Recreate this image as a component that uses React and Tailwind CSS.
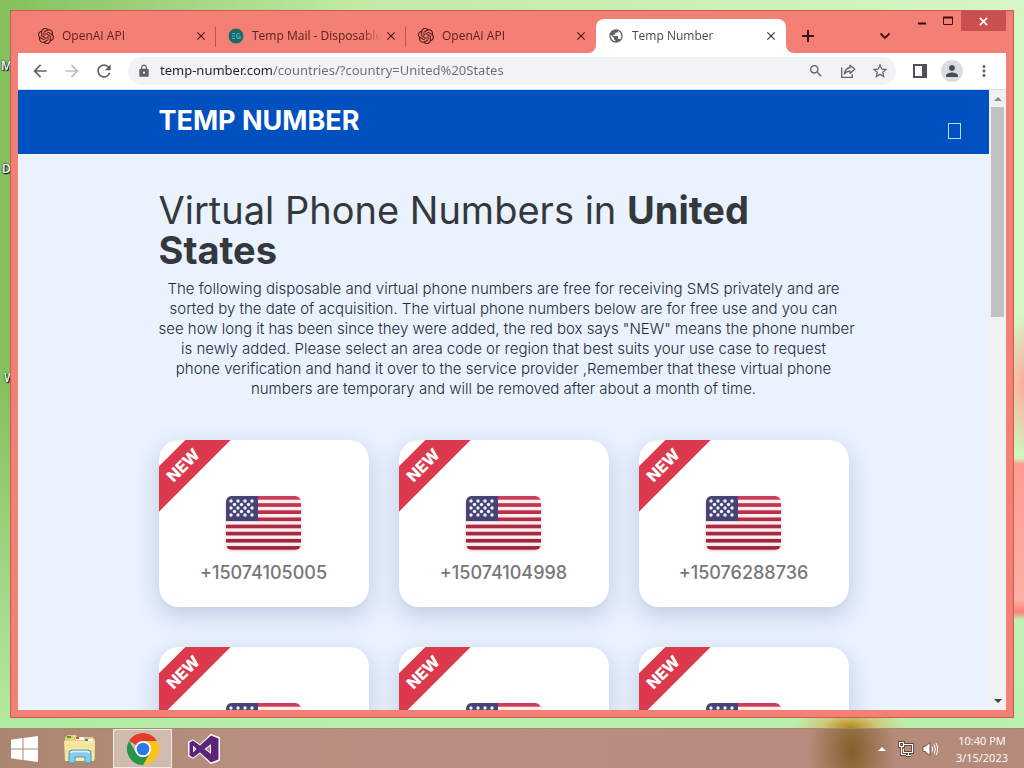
import { SiOpenai } from "react-icons/si";
import {
  MdArrowBack,
  MdArrowForward,
  MdClose,
  MdLock,
  MdMoreVert,
  MdPerson,
  MdPublic,
  MdRefresh,
  MdSearch,
  MdStarBorder,
} from "react-icons/md";

const TABS = [
  { id: 1, title: "OpenAI API", icon: "openai" },
  { id: 2, title: "Temp Mail - Disposable", icon: "mail" },
  { id: 3, title: "OpenAI API", icon: "openai" },
  { id: 4, title: "Temp Number", icon: "globe", active: true },
];

const CARDS = [
  { id: 1, number: "+15074105005" },
  { id: 2, number: "+15074104998" },
  { id: 3, number: "+15076288736" },
  { id: 4 },
  { id: 5 },
  { id: 6 },
];

const INTRO = [
  "The following disposable and virtual phone numbers are free for receiving SMS privately and are",
  "sorted by the date of acquisition. The virtual phone numbers below are for free use and you can",
  "see how long it has been since they were added, the red box says \"NEW\" means the phone number",
  "is newly added. Please select an area code or region that best suits your use case to request",
  "phone verification and hand it over to the service provider ,Remember that these virtual phone",
  "numbers are temporary and will be removed after about a month of time.",
];

function Favicon({ name }) {
  if (name === "openai") return <SiOpenai className="w-4 h-4 shrink-0 text-[#4a1713]" />;
  if (name === "globe") return <MdPublic className="w-4 h-4 shrink-0 text-[#5f6368]" />;
  return (
    <svg viewBox="0 0 16 16" className="w-4 h-4 shrink-0">
      <circle cx="8" cy="8" r="7.5" fill="#176b6b" />
      <path d="M4 5.500h3M4 8h3M4 10.500h3M12 5.800c-2-.8-3.500 0-3.500 2.200s1.500 3 3.500 2.200V8h-1.500" fill="none" stroke="#4fb5ad" strokeWidth="1.100" />
    </svg>
  );
}

function TabFoot({ className }) {
  return (
    <svg viewBox="0 0 8 8" className={`absolute bottom-0 w-2 h-2 ${className}`}>
      <path d="M8 0v8H0a8 8 0 0 0 8-8z" fill="#fff" />
    </svg>
  );
}

function Tab({ tab, divider }) {
  return (
    <div
      className={`relative flex items-center w-[190px] h-full pl-3 pr-2 ${
        tab.active ? "bg-white rounded-t-lg text-[#45494d]" : "text-[#5a221d]"
      }`}
    >
      {tab.active && (
        <>
          <TabFoot className="-left-2" />
          <TabFoot className="-right-2 -scale-x-100" />
        </>
      )}
      <Favicon name={tab.icon} />
      <span className="flex-1 ml-2 text-xs whitespace-nowrap overflow-hidden [mask-image:linear-gradient(to_right,#000_86%,transparent)]">
        {tab.title}
      </span>
      <button aria-label="Close tab" className="flex items-center justify-center w-[14px] h-4 ml-1">
        <MdClose className={`w-[14px] h-[14px] ${tab.active ? "text-[#35383b]" : "text-[#4a1713]"}`} stroke="currentColor" />
      </button>
      {divider && <span className="absolute right-0 top-2 w-px h-5 bg-[#b9564c]" />}
    </div>
  );
}

function TitleBar() {
  return (
    <div className="flex h-[42px] shrink-0 pl-2">
      <div className="flex pt-2">
        {TABS.map((tab, i) => (
          <Tab key={tab.id} tab={tab} divider={i < 2} />
        ))}
      </div>
      <button aria-label="New tab" className="flex items-center justify-center w-7 ml-2 mt-2">
        <svg viewBox="0 0 14 14" className="w-[14px] h-[14px]">
          <path d="M7 1v12M1 7h12" stroke="#3b120f" strokeWidth="2" />
        </svg>
      </button>
      <div className="flex-1" />
      <button aria-label="Search tabs" className="flex items-center justify-center w-7 mt-2 mr-[10px]">
        <svg viewBox="0 0 12 8" className="w-3 h-2">
          <path d="M1.500 1.500L6 6l4.500-4.500" fill="none" stroke="#3b120f" strokeWidth="1.800" />
        </svg>
      </button>
      <div className="flex h-5">
        <button aria-label="Minimize" className="flex items-center justify-center w-[26px]">
          <svg viewBox="0 0 10 10" className="w-[10px] h-[10px]">
            <path d="M1 7.500h8" stroke="#220907" strokeWidth="2" />
          </svg>
        </button>
        <button aria-label="Maximize" className="flex items-center justify-center w-[26px]">
          <svg viewBox="0 0 12 10" className="w-3 h-[10px]">
            <path d="M1.500 1.500h9v7h-9z" fill="none" stroke="#3b120f" />
            <path d="M1 1.500h10" stroke="#3b120f" strokeWidth="2" />
          </svg>
        </button>
        <button aria-label="Close window" className="flex items-center justify-center w-[45px] bg-[#c9504f]">
          <svg viewBox="0 0 10 10" className="w-[9px] h-[9px]">
            <path d="M1 1l8 8M9 1L1 9" stroke="#fff" strokeWidth="1.800" />
          </svg>
        </button>
      </div>
    </div>
  );
}

function ToolButton({ label, children }) {
  return (
    <button aria-label={label} className="flex items-center justify-center w-8 h-7 shrink-0">
      {children}
    </button>
  );
}

function Toolbar() {
  return (
    <div className="flex items-center h-[37px] shrink-0 bg-white px-[6px] text-[#5f6368] border-b border-[#d9dde1]">
      <ToolButton label="Back">
        <MdArrowBack className="w-5 h-5" />
      </ToolButton>
      <ToolButton label="Forward">
        <MdArrowForward className="w-5 h-5 text-[#bcbec0]" />
      </ToolButton>
      <ToolButton label="Reload">
        <MdRefresh className="w-5 h-5" />
      </ToolButton>
      <div className="flex items-center flex-1 h-7 mx-2 pl-2 rounded-full bg-[#f1f3f4]">
        <MdLock className="w-[14px] h-[14px] mx-px shrink-0" />
        <input
          aria-label="Address"
          defaultValue="temp-number.com/countries/?country=United%20States"
          className="flex-1 min-w-0 ml-2 font-['Noto_Sans',sans-serif] text-[13px] outline-none text-transparent bg-clip-text bg-[linear-gradient(to_right,#202124_113px,#6a6e73_113px)]"
        />
        <ToolButton label="Zoom">
          <MdSearch className="w-4 h-4" />
        </ToolButton>
        <ToolButton label="Share">
          <svg viewBox="0 0 16 16" className="w-4 h-4" fill="none" stroke="#5f6368" strokeWidth="1.300">
            <path d="M1.700 4.500v9.800h10.600v-3" />
            <path d="M10 2.200l4.800 4.100L10 10.400V8.200c-2.600 0-4.300.8-5.700 2.800.5-3.600 2.500-6 5.700-6.500z" strokeLinejoin="round" />
          </svg>
        </ToolButton>
        <ToolButton label="Bookmark">
          <MdStarBorder className="w-[18px] h-[18px]" />
        </ToolButton>
      </div>
      <ToolButton label="Side panel">
        <svg viewBox="0 0 14 14" className="w-[14px] h-[14px]">
          <path d="M1 1h12v12H1z" fill="#fff" stroke="#4e5256" strokeWidth="2" />
          <path d="M9 1h4v12H9z" fill="#4e5256" />
        </svg>
      </ToolButton>
      <ToolButton label="Profile">
        <span className="flex items-center justify-center w-[22px] h-[22px] rounded-full bg-[#dadce3]">
          <MdPerson className="w-[18px] h-[18px] text-[#474c58]" />
        </span>
      </ToolButton>
      <ToolButton label="Menu">
        <MdMoreVert className="w-[18px] h-[18px]" />
      </ToolButton>
    </div>
  );
}

const STRIPES = [0, 1, 2, 3, 4, 5, 6, 7];
const STARS = [
  [5, 5], [12, 5], [19, 5], [26, 5],
  [8.5, 8.5], [15.5, 8.5], [22.5, 8.5],
  [5, 12], [12, 12], [19, 12], [26, 12],
  [8.5, 15.5], [15.5, 15.5], [22.5, 15.5],
  [5, 19], [12, 19], [19, 19], [26, 19],
];

function UsFlag() {
  return (
    <svg viewBox="0 0 75 54" className="w-[75px] h-[54px] rounded-md shadow-sm shadow-red-200">
      <defs>
        <linearGradient id="stripe" x1="0" y1="0" x2="0" y2="54" gradientUnits="userSpaceOnUse">
          <stop offset="0" stopColor="#cf3d58" />
          <stop offset="0.3" stopColor="#b92f4a" />
          <stop offset="1" stopColor="#98233c" />
        </linearGradient>
      </defs>
      <path d="M0 0h75v54H0z" fill="#fbeeee" />
      {STRIPES.map((n) => (
        <rect key={n} y={n * 7.15} x="0" width="75" height="3.700" fill="url(#stripe)" />
      ))}
      <path d="M0 0h32v25H0z" fill="#454477" />
      {STARS.map(([x, y]) => (
        <circle key={`${x}-${y}`} cx={x} cy={y} r="1.700" fill="#f3f1fa" />
      ))}
    </svg>
  );
}

function NumberCard({ number }) {
  return (
    <a
      href="#number"
      className="relative flex flex-col items-center h-[167px] pt-14 rounded-[20px] bg-white overflow-hidden shadow-[0_8px_24px_rgba(60,90,150,0.26)]"
    >
      <span className="absolute -left-9 top-[9px] w-[120px] h-8 leading-8 -rotate-45 bg-[#dc3a4c] text-center text-base font-extrabold text-white">
        NEW
      </span>
      <UsFlag />
      {number && <span className="mt-[9px] text-lg leading-7 font-medium text-[#777]">{number}</span>}
    </a>
  );
}

function Page() {
  return (
    <div className="flex flex-1 min-h-0 bg-[#eaf2fd]">
      <main className="flex-1 min-w-0 overflow-hidden font-[Inter,sans-serif]">
        <header className="relative h-16 bg-[#0150c0]">
          <div className="max-w-[690px] mx-auto">
            <a href="#home" className="text-[27px] leading-[62px] font-bold text-white">
              TEMP NUMBER
            </a>
          </div>
          <button aria-label="Open menu" className="absolute right-7 top-[33px] w-[13px] h-4 border border-[#b9dcf5]" />
        </header>
        <div className="max-w-[690px] mx-auto pt-9">
          <h1 className="text-[38px] leading-10 text-[#33383d]">
            Virtual Phone Numbers in <b>United States</b>
          </h1>
          <p className="mt-[9px] text-[15px] leading-5 font-light text-center text-[#212a3c]">
            {INTRO.map((line) => (
              <span key={line} className="block whitespace-nowrap">{line}</span>
            ))}
          </p>
          <div className="grid grid-cols-3 gap-x-[30px] gap-y-10 mt-[41px]">
            {CARDS.map((card) => (
              <NumberCard key={card.id} number={card.number} />
            ))}
          </div>
        </div>
      </main>
      <div className="flex flex-col items-center w-[17px] py-[7px] bg-[#f1f1f1]">
        <svg viewBox="0 0 8 4" className="w-2 h-1 shrink-0">
          <path d="M0 4l4-4 4 4z" fill="#8a8a8a" />
        </svg>
        <div className="w-[13px] h-[210px] mt-[6px] bg-[#c1c1c1]" />
        <div className="flex-1" />
        <svg viewBox="0 0 8 4" className="w-2 h-1 shrink-0">
          <path d="M0 0l4 4 4-4z" fill="#404040" />
        </svg>
      </div>
    </div>
  );
}

function WindowsLogo() {
  return (
    <svg viewBox="0 0 27 26" className="w-[27px] h-[26px]" fill="#fff">
      <path d="M0 3.700L11.500 2v10.500H0zM12.500 1.900L27 0v12.500H12.500zM0 13.500h11.500V24L0 22.300zM12.500 13.500H27V26l-14.500-1.900z" />
    </svg>
  );
}

function ExplorerIcon() {
  return (
    <svg viewBox="0 0 32 30" className="w-8 h-[30px]">
      <path d="M1 3l3-2h8l2 3h5l2-1h8l2 3v19H1z" fill="#e9cf76" />
      <path d="M3 2h4v2H3z" fill="#3e9b45" />
      <path d="M12 3h8v3h-8zM21 5h8v2h-8z" fill="#fff" />
      <path d="M12 3h3v2h-3z" fill="#c5532f" />
      <path d="M21 5h3v2h-3z" fill="#2d87c9" />
      <path d="M0 7h31l-1 20H1z" fill="#f8e8a0" />
      <path d="M1 12h29M1 17h29" stroke="#eed882" />
      <path d="M5 29V19q0-3 3-3h16q3 0 3 3v10h-6v-6H11v6z" fill="#8ccbee" stroke="#4694c8" />
      <path d="M7 19q0-1.500 2-1.500h14q2 0 2 1.500" fill="none" stroke="#dff4ff" strokeWidth="1.500" />
    </svg>
  );
}

function ChromeIcon() {
  return (
    <svg viewBox="0 0 48 48" className="w-8 h-8">
      <path d="M24 24L3.200 12A24 24 0 0 1 44.800 12z" fill="#e33b2e" />
      <path d="M24 12h20.800A24 24 0 0 1 24 48l10.400-18z" fill="#fcc31e" />
      <path d="M3.200 12l10.400 18A12 12 0 0 0 34.400 30L24 48A24 24 0 0 1 3.200 12z" fill="#26944a" />
      <circle cx="24" cy="24" r="12" fill="#fff" />
      <circle cx="24" cy="24" r="9.500" fill="#2f76e8" />
    </svg>
  );
}

function VisualStudioIcon() {
  return (
    <svg viewBox="0 0 32 30" className="w-8 h-[30px]">
      <path
        fillRule="evenodd"
        d="M23 1l8 3v22l-8 3L12 18.500l-7 5L1 21.500v-13l4-2 7 5zM23 10l-6.500 5 6.500 5zM5 11.500v7L8.500 15z"
        fill="#fff"
        stroke="#fff"
        strokeWidth="2"
        strokeLinejoin="round"
      />
      <path
        fillRule="evenodd"
        d="M23 1.500l7.500 3v21l-7.500 3L12 18.500l-7 5L1.500 21.500v-13l3.500-2 7 5zM23 10l-6.500 5 6.500 5zM5 11.500v7L8.500 15z"
        fill="#5c2379"
      />
    </svg>
  );
}

function Taskbar() {
  return (
    <footer className="relative flex items-center h-10 shrink-0 border-t border-[#a28b74] bg-[radial-gradient(ellipse_44px_70px_at_852px_22px,#84602c,transparent),linear-gradient(to_right,#ab8570,#b88f80_25%,#b98c80_60%,#b58a7a)]">
      <button aria-label="Start" className="flex items-center justify-center w-12 h-full">
        <WindowsLogo />
      </button>
      <button aria-label="File Explorer" className="flex items-center justify-center w-16 h-full">
        <ExplorerIcon />
      </button>
      <button aria-label="Google Chrome" className="flex items-center justify-center w-[59px] h-full ml-px border border-[#f4e9e0] bg-[#d0bcae]">
        <ChromeIcon />
      </button>
      <button aria-label="Visual Studio" className="flex items-center justify-center w-16 h-full">
        <VisualStudioIcon />
      </button>
      <div className="flex-1" />
      <div className="flex items-center gap-2 pr-4 text-white">
        <button aria-label="Show hidden icons" className="flex items-center justify-center w-4 h-6">
          <svg viewBox="0 0 8 4" className="w-2 h-1">
            <path d="M0 4l4-4 4 4z" fill="#fff" />
          </svg>
        </button>
        <button aria-label="Network">
          <svg viewBox="0 0 16 16" className="w-4 h-4" fill="none" stroke="#5b4337" strokeWidth="3">
            <path d="M6 3.500h8.500v8H5.500V8M8 14.500h5M10.500 12v2M1.500 1.500h4v4h-4zM3.500 6v7.500H8" />
            <path d="M6 3.500h8.500v8H5.500V8M8 14.500h5M10.500 12v2M1.500 1.500h4v4h-4zM3.500 6v7.500H8" stroke="#fff" strokeWidth="1.200" />
          </svg>
        </button>
        <button aria-label="Volume">
          <svg viewBox="0 0 16 16" className="w-4 h-4">
            <path d="M1 5.500h2.500L8 1.500v13l-4.500-4H1z" fill="#fff" stroke="#5b4337" strokeWidth=".8" />
            <path d="M10 5.500q1.500 2.500 0 5M12 3.500q3 4.500 0 9M14 2q3.500 6 0 12" fill="none" stroke="#fff" />
          </svg>
        </button>
        <div className="ml-[10px] text-[11px] leading-[17px] text-center">
          <div>10:40 PM</div>
          <div>3/15/2023</div>
        </div>
      </div>
    </footer>
  );
}

export default function App() {
  return (
    <div className="flex flex-col h-screen overflow-hidden font-['Open_Sans',sans-serif] bg-[linear-gradient(to_bottom,transparent_50%,#b8efaa),linear-gradient(to_right,#84c05c,#c0eaa4_35%,#d6f6c6)]">
      <div className="relative flex flex-col flex-1 min-h-0 p-[10px] bg-[radial-gradient(ellipse_56px_24px_at_850px_100%,#b88a10,#e0a05080_50%,transparent),radial-gradient(ellipse_24px_70px_at_100%_385px,#ffa89c,transparent),linear-gradient(to_bottom,transparent_458px,#ff9c92_464px,#ffb0a8_600px,#f98377_612px,transparent_620px)] bg-no-repeat bg-[size:auto,auto,14px_100%] bg-[position:0_0,0_0,100%_0]">
        <span className="absolute left-px top-[58px] text-xs font-semibold text-white [text-shadow:0_0_2px_#000,1px_1px_1px_#000]">M</span>
        <span className="absolute left-0.5 top-[161px] text-xs font-semibold text-white [text-shadow:0_0_2px_#000,1px_1px_1px_#000]">D</span>
        <span className="absolute left-1 top-[370px] text-xs font-semibold text-white [text-shadow:0_0_2px_#000,1px_1px_1px_#000]">W</span>
        <div className="relative flex flex-col flex-1 min-h-0 border border-[#c25e50] bg-[#f47f74]">
          <div className="flex flex-col flex-1 min-h-0 px-[7px] pb-[7px]">
            <TitleBar />
            <Toolbar />
            <Page />
          </div>
        </div>
      </div>
      <Taskbar />
    </div>
  );
}
